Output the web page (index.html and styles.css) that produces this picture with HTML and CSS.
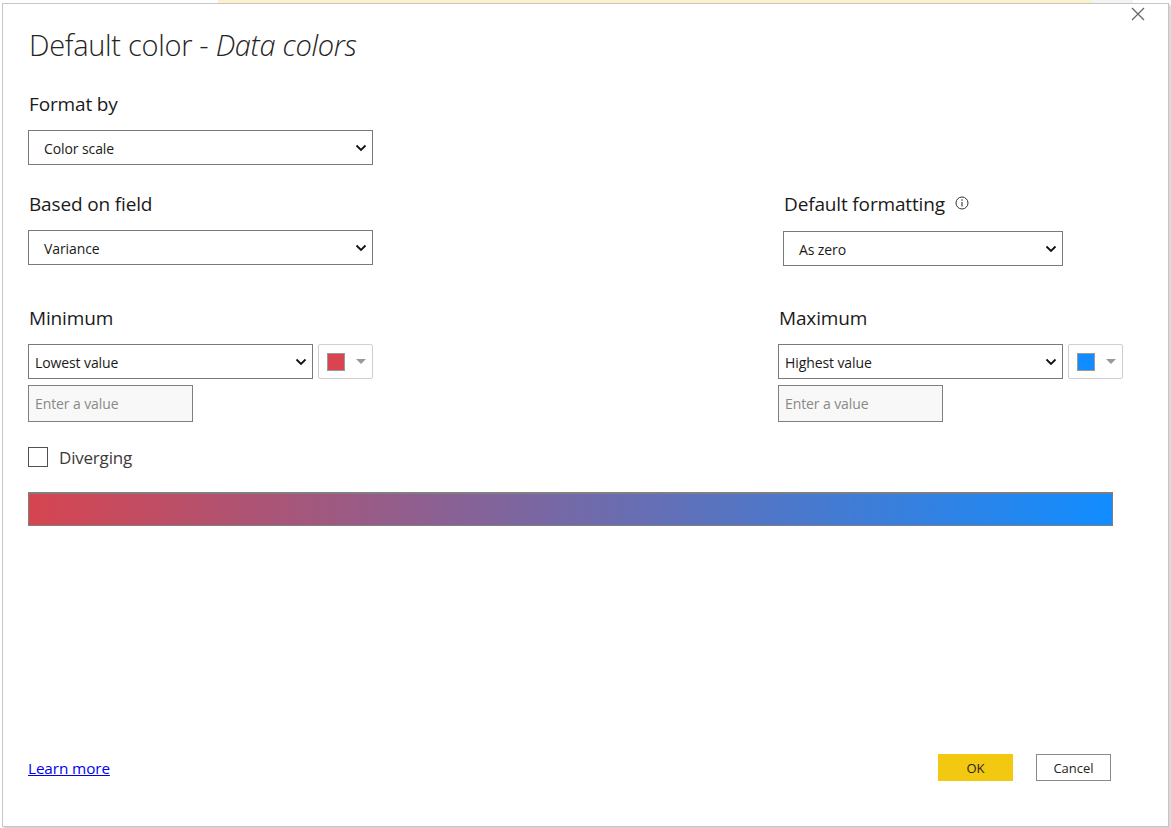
FILE: index.html
```html
<!DOCTYPE html>
<html>
<head>
<meta charset="utf-8">
<link rel="stylesheet" href="styles.css">
</head>
<body>
<div class="app">
  <div class="app-strip"><span class="strip-yellow"></span><span class="strip-gray"></span></div>
</div>
<div class="dialog">
  <button class="close" aria-label="Close">
    <svg width="14" height="14" viewBox="0 0 14 14"><path d="M1 1 L13 13 M13 1 L1 13" stroke="#666" stroke-width="1.3" fill="none"/></svg>
  </button>
  <h1 class="title">Default color - <em>Data colors</em></h1>

  <div class="row row-format">
    <div class="col">
      <div class="label">Format by</div>
      <div class="select w-full"><span>Color scale</span><svg class="chev" width="12" height="8" viewBox="0 0 12 8"><path d="M1.5 1.5 L6 6 L10.5 1.5" stroke="#111" stroke-width="1.8" fill="none"/></svg></div>
    </div>
  </div>

  <div class="row row-field">
    <div class="col">
      <div class="label">Based on field</div>
      <div class="select w-full"><span>Variance</span><svg class="chev" width="12" height="8" viewBox="0 0 12 8"><path d="M1.5 1.5 L6 6 L10.5 1.5" stroke="#111" stroke-width="1.8" fill="none"/></svg></div>
    </div>
    <div class="col col-right col-default">
      <div class="label">Default formatting <svg class="info" width="14" height="14" viewBox="0 0 14 14"><circle cx="7" cy="7" r="6" stroke="#333" stroke-width="1" fill="none"/><path d="M7 6 V10.5" stroke="#333" stroke-width="1.1"/><circle cx="7" cy="4" r="0.8" fill="#333"/></svg></div>
      <div class="select w-default"><span>As zero</span><svg class="chev" width="12" height="8" viewBox="0 0 12 8"><path d="M1.5 1.5 L6 6 L10.5 1.5" stroke="#111" stroke-width="1.8" fill="none"/></svg></div>
    </div>
  </div>

  <div class="row row-minmax">
    <div class="col">
      <div class="label">Minimum</div>
      <div class="pick">
        <div class="select select-small w-val"><span>Lowest value</span><svg class="chev" width="12" height="8" viewBox="0 0 12 8"><path d="M1.5 1.5 L6 6 L10.5 1.5" stroke="#111" stroke-width="1.8" fill="none"/></svg></div>
        <div class="color-btn"><span class="swatch swatch-red"></span><span class="caret"></span></div>
      </div>
      <input class="value" type="text" placeholder="Enter a value">
    </div>
    <div class="col col-right">
      <div class="label">Maximum</div>
      <div class="pick">
        <div class="select select-small w-val"><span>Highest value</span><svg class="chev" width="12" height="8" viewBox="0 0 12 8"><path d="M1.5 1.5 L6 6 L10.5 1.5" stroke="#111" stroke-width="1.8" fill="none"/></svg></div>
        <div class="color-btn"><span class="swatch swatch-blue"></span><span class="caret"></span></div>
      </div>
      <input class="value" type="text" placeholder="Enter a value">
    </div>
  </div>

  <label class="check"><span class="box"></span>Diverging</label>

  <div class="gradient"></div>

  <div class="footer">
    <a class="learn" href="#">Learn more</a>
    <div class="buttons">
      <button class="btn btn-ok">OK</button>
      <button class="btn btn-cancel">Cancel</button>
    </div>
  </div>
</div>
</body>
</html>
```

FILE: styles.css
```css
* { box-sizing: border-box; }
html, body { margin: 0; padding: 0; }
body {
  width: 1171px;
  height: 828px;
  background: #ffffff;
  font-family: "Open Sans", "Noto Sans", sans-serif;
  color: #252423;
  overflow: hidden;
  position: relative;
}
.app { height: 828px; }
.app-strip { display: flex; height: 4px; padding-left: 218px; }
.strip-yellow { width: 873px; background: #fdf0cf; }
.strip-gray { width: 42px; background: #f3f3f3; }

.dialog {
  position: absolute;
  left: 2px;
  top: 3px;
  width: 1167px;
  height: 824px;
  background: #fff;
  border: 1px solid #c6c6c6;
  box-shadow: 2px 2px 2px rgba(0,0,0,0.18);
  padding: 0 0 0 25px;
}
.close {
  position: absolute;
  right: 21px;
  top: 1px;
  width: 18px;
  height: 18px;
  padding: 2px;
  border: 0;
  background: transparent;
  display: flex;
  align-items: center;
  justify-content: center;
}
.title {
  margin: 21px 0 0 1px;
  font-size: 29px;
  font-weight: 300;
  letter-spacing: -0.3px;
  line-height: 40px;
  color: #252423;
}
.title em { font-style: italic; }

.row { display: flex; }
.col { width: 345px; flex-shrink: 0; display: flex; flex-direction: column; }
.col-right { margin-left: 405px; }
.col-default { margin-left: 410px; width: 280px; }

.label {
  font-size: 19px;
  line-height: 24px;
  letter-spacing: -0.15px;
  color: #1b1a19;
  display: flex;
  align-items: center;
  padding-left: 1px;
  white-space: nowrap;
}
.info { margin-left: 10px; margin-top: -2px; }

.row-format { margin-top: 27px; }
.row-format .label { margin-bottom: 14px; }
.row-field { margin-top: 27px; }
.row-field .label { margin-bottom: 14px; }
.row-field .col-default .label { margin-bottom: 15px; }
.row-minmax { margin-top: 40px; }
.row-minmax .label { margin-bottom: 14px; }

.select {
  height: 35px;
  border: 1px solid #7a7a7a;
  background: #fff;
  display: flex;
  align-items: center;
  justify-content: space-between;
  padding: 1px 5px 0 15px;
  font-size: 14px;
  color: #1b1a19;
  flex-shrink: 0;
}
.select span { letter-spacing: -0.1px; }
.w-full { width: 345px; }
.w-default { width: 280px; }
.w-val { width: 285px; padding-left: 6px; }
.chev { margin-top: 0; }

.pick { display: flex; gap: 5px; }
.color-btn {
  width: 55px;
  height: 35px;
  flex-shrink: 0;
  border: 1px solid #cfcfcf;
  border-radius: 2px;
  display: flex;
  align-items: center;
  padding-left: 8px;
}
.swatch { width: 18px; height: 18px; border: 1px solid #9a9a9a; }
.swatch-red { background: #d64550; }
.swatch-blue { background: #118dff; }
.caret {
  margin-left: 11px;
  width: 0; height: 0;
  border-left: 5px solid transparent;
  border-right: 5px solid transparent;
  border-top: 5px solid #9a9a9a;
}

.value {
  margin-top: 6px;
  width: 165px;
  height: 37px;
  border: 1px solid #7f7f7f;
  background: #f8f8f8;
  padding: 0 6px;
  font-family: "Open Sans", "Noto Sans", sans-serif;
  font-size: 14px;
  letter-spacing: -0.1px;
  outline: none;
}
.value::placeholder { color: #8a8886; }

.check {
  margin-top: 25px;
  display: flex;
  align-items: center;
  font-size: 17px;
  letter-spacing: -0.2px;
  color: #3b3a39;
  height: 20px;
}
.box {
  width: 20px;
  height: 20px;
  border: 1px solid #505050;
  margin-right: 11px;
  background: #fff;
}

.gradient {
  margin-top: 25px;
  width: 1085px;
  height: 34px;
  border: 1px solid #7f7f7f;
  border-top-width: 2px;
  background: linear-gradient(to right, #d64550, #118dff);
}

.footer {
  margin-top: 228px;
  width: 1083px;
  display: flex;
  align-items: center;
  justify-content: space-between;
}
.learn {
  font-size: 15.3px;
  color: #0000ee;
  text-decoration: underline;
  letter-spacing: -0.1px;
  margin-top: 0;
}
.buttons { display: flex; gap: 23px; }
.btn {
  width: 75px;
  height: 27px;
  font-family: "Open Sans", "Noto Sans", sans-serif;
  font-size: 13px;
  color: #252423;
  padding: 0;
}
.btn-ok { background: #f2c811; border: 0; }
.btn-cancel { background: #fff; border: 1px solid #8a8a8a; }
```
